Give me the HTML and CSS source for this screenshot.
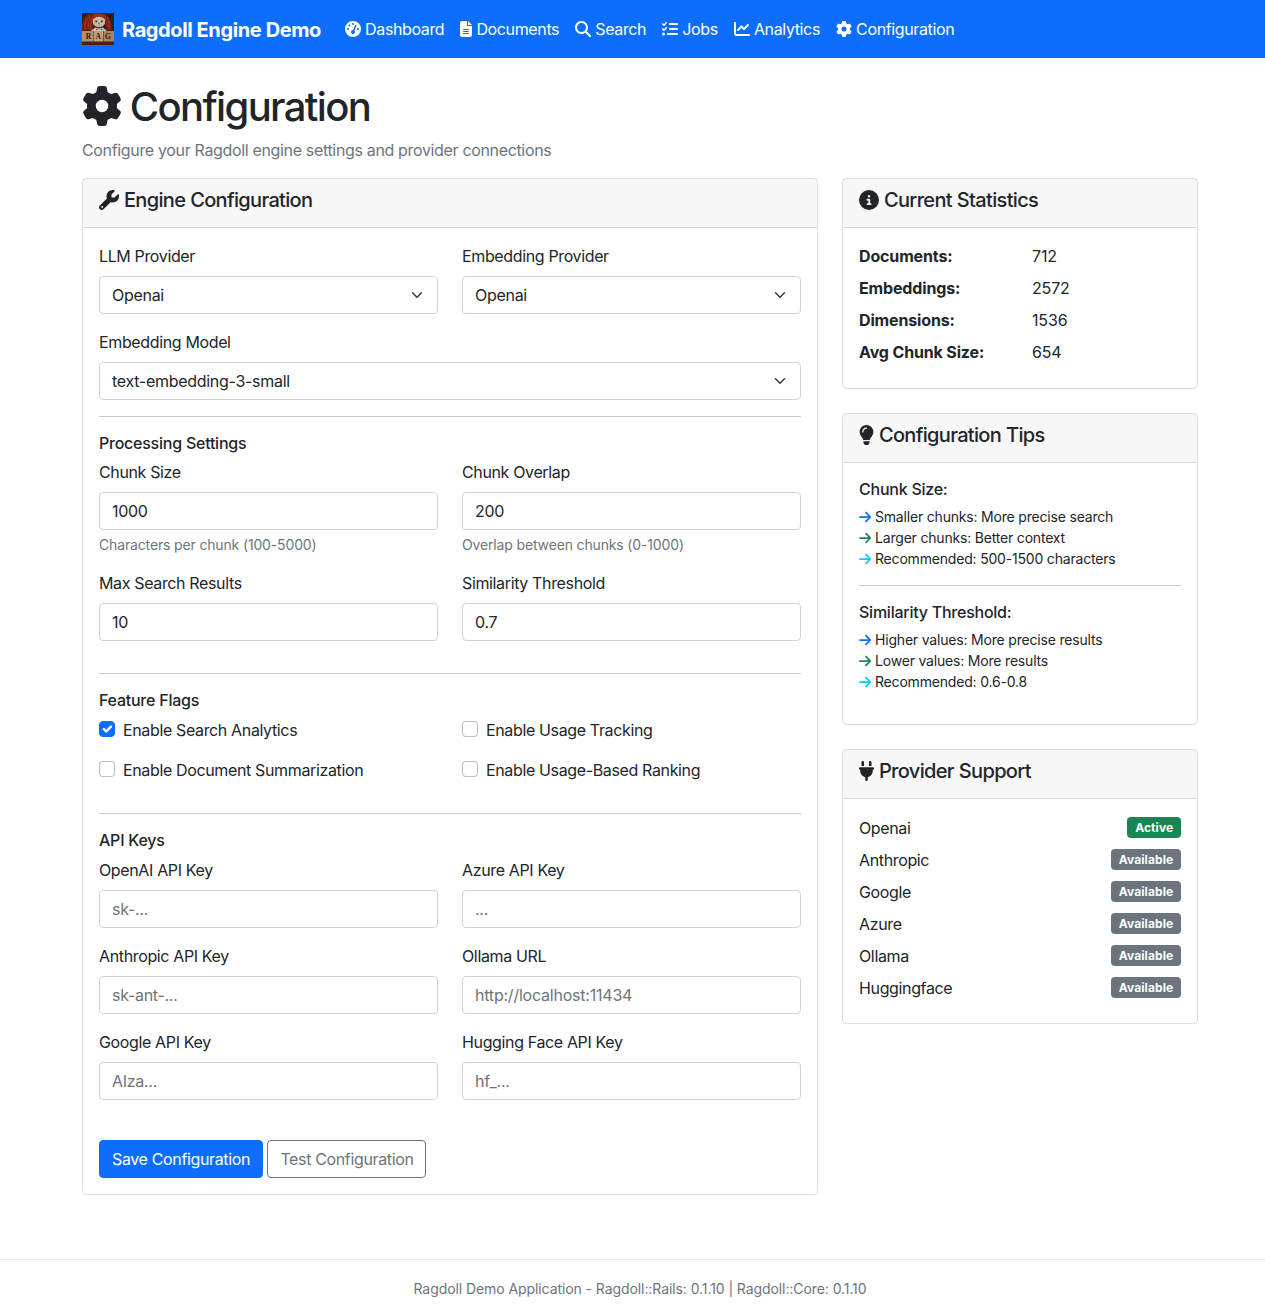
FILE: index.html
```html
<!DOCTYPE html>
<html lang="en">
<head>
<meta charset="utf-8">
<title>Ragdoll Engine Demo</title>
<link rel="stylesheet" href="styles.css">
</head>
<body>
<svg class="sprite" aria-hidden="true">
  <symbol id="gear" viewBox="0 0 512 512"><path d="M495.9 166.6c3.2 8.700 .5 18.400-6.400 24.600l-43.300 39.400c1.100 8.300 1.700 16.800 1.700 25.400s-.6 17.100-1.700 25.400l43.300 39.400c6.900 6.200 9.600 15.900 6.400 24.600c-4.400 11.900-9.700 23.300-15.800 34.300l-4.700 8.100c-6.600 11-14 21.400-22.100 31.200c-5.900 7.200-15.700 9.600-24.500 6.800l-55.700-17.700c-13.400 10.300-28.200 18.900-44 25.400l-12.500 57.100c-2 9.100-9 16.300-18.200 17.800c-13.800 2.300-28 3.500-42.500 3.500s-28.700-1.200-42.500-3.500c-9.200-1.500-16.200-8.700-18.200-17.800l-12.500-57.100c-15.800-6.500-30.600-15.100-44-25.400L83.100 425.900c-8.800 2.800-18.600 .3-24.500-6.800c-8.100-9.800-15.500-20.200-22.100-31.200l-4.700-8.100c-6.100-11-11.400-22.400-15.800-34.300c-3.200-8.700-.5-18.400 6.400-24.600l43.300-39.400C64.600 273.100 64 264.600 64 256s.6-17.100 1.700-25.400L22.400 191.200c-6.900-6.200-9.600-15.900-6.400-24.600c4.400-11.900 9.700-23.300 15.800-34.300l4.700-8.100c6.600-11 14-21.400 22.100-31.200c5.900-7.200 15.700-9.600 24.500-6.800l55.700 17.700c13.400-10.300 28.200-18.900 44-25.400l12.500-57.100c2-9.100 9-16.300 18.200-17.800C227.300 1.200 241.500 0 256 0s28.700 1.200 42.500 3.500c9.200 1.500 16.200 8.700 18.200 17.800l12.500 57.100c15.800 6.500 30.600 15.100 44 25.400l55.700-17.700c8.800-2.800 18.600-.3 24.500 6.800c8.100 9.800 15.500 20.200 22.100 31.200l4.700 8.100c6.100 11 11.400 22.400 15.800 34.300zM256 336a80 80 0 1 0 0-160 80 80 0 1 0 0 160z"/></symbol>
  <symbol id="wrench" viewBox="0 0 512 512"><path d="M352 320c88.400 0 160-71.600 160-160c0-15.300-2.200-30.100-6.200-44.200c-3.100-10.800-16.400-13.200-24.300-5.300l-76.800 76.800c-3 3-7.100 4.700-11.300 4.700L336 192c-8.800 0-16-7.200-16-16l0-57.400c0-4.200 1.700-8.300 4.700-11.300l76.800-76.800c7.900-7.900 5.400-21.200-5.300-24.300C382.100 2.200 367.300 0 352 0C263.600 0 192 71.600 192 160c0 19.100 3.400 37.500 9.500 54.500L19.900 396.100C7.200 408.800 0 426.100 0 444.100C0 481.600 30.400 512 67.900 512c18 0 35.300-7.200 48-19.900L297.500 310.500c17 6.200 35.400 9.500 54.500 9.500zM80 408a24 24 0 1 1 0 48 24 24 0 1 1 0-48z"/></symbol>
  <symbol id="info" viewBox="0 0 512 512"><path d="M256 512A256 256 0 1 0 256 0a256 256 0 1 0 0 512zM216 336l24 0 0-64-24 0c-13.300 0-24-10.700-24-24s10.700-24 24-24l48 0c13.300 0 24 10.700 24 24l0 88 8 0c13.300 0 24 10.700 24 24s-10.700 24-24 24l-80 0c-13.300 0-24-10.700-24-24s10.700-24 24-24zm40-208a32 32 0 1 1 0 64 32 32 0 1 1 0-64z"/></symbol>
  <symbol id="bulb" viewBox="0 0 384 512"><path d="M272 384c9.600-31.900 29.500-59.100 49.200-86.200c5.200-7.100 10.400-14.200 15.400-21.400c19.800-28.500 31.400-63 31.400-100.300C368 78.800 289.200 0 192 0S16 78.800 16 176c0 37.300 11.600 71.900 31.400 100.300c5 7.200 10.200 14.300 15.400 21.400c19.800 27.100 39.700 54.400 49.200 86.200l160 0zM192 512c44.200 0 80-35.800 80-80l0-16-160 0 0 16c0 44.200 35.800 80 80 80zM112 176c0 8.800-7.200 16-16 16s-16-7.200-16-16c0-61.900 50.100-112 112-112c8.800 0 16 7.200 16 16s-7.200 16-16 16c-44.200 0-80 35.800-80 80z"/></symbol>
  <symbol id="plug" viewBox="0 0 384 512"><path d="M96 0C78.300 0 64 14.300 64 32l0 96 64 0 0-96c0-17.700-14.300-32-32-32zM288 0c-17.700 0-32 14.300-32 32l0 96 64 0 0-96c0-17.700-14.300-32-32-32zM32 160c-17.700 0-32 14.300-32 32s14.300 32 32 32l0 32c0 77.400 55 142 128 156.800l0 67.200c0 17.700 14.300 32 32 32s32-14.300 32-32l0-67.200C297 398 352 333.400 352 256l0-32c17.700 0 32-14.300 32-32s-14.300-32-32-32L32 160z"/></symbol>
  <symbol id="search" viewBox="0 0 512 512"><path d="M416 208c0 45.900-14.900 88.300-40 122.700L502.600 457.400c12.500 12.500 12.500 32.800 0 45.300s-32.800 12.500-45.300 0L330.700 376c-34.400 25.200-76.800 40-122.700 40C93.100 416 0 322.900 0 208S93.100 0 208 0S416 93.100 416 208zM208 352a144 144 0 1 0 0-288 144 144 0 1 0 0 288z"/></symbol>
  <symbol id="file" viewBox="0 0 384 512"><path d="M64 0C28.700 0 0 28.700 0 64L0 448c0 35.300 28.700 64 64 64l256 0c35.300 0 64-28.700 64-64l0-288-128 0c-17.700 0-32-14.300-32-32L224 0 64 0zM256 0l0 128 128 0L256 0zM112 256l160 0c8.800 0 16 7.200 16 16s-7.200 16-16 16l-160 0c-8.800 0-16-7.200-16-16s7.200-16 16-16zm0 64l160 0c8.800 0 16 7.200 16 16s-7.200 16-16 16l-160 0c-8.800 0-16-7.200-16-16s7.200-16 16-16zm0 64l160 0c8.800 0 16 7.200 16 16s-7.200 16-16 16l-160 0c-8.800 0-16-7.200-16-16s7.200-16 16-16z"/></symbol>
  <symbol id="chart" viewBox="0 0 512 512"><path d="M64 64c0-17.700-14.300-32-32-32S0 46.300 0 64L0 400c0 44.200 35.800 80 80 80l400 0c17.700 0 32-14.300 32-32s-14.300-32-32-32L80 416c-8.800 0-16-7.200-16-16L64 64zm406.600 86.600c12.500-12.500 12.500-32.800 0-45.300s-32.800-12.500-45.300 0L320 210.700l-57.400-57.400c-12.500-12.500-32.800-12.500-45.300 0l-112 112c-12.500 12.500-12.500 32.800 0 45.300s32.800 12.500 45.300 0L240 221.300l57.400 57.400c12.500 12.500 32.800 12.500 45.300 0l128-128z"/></symbol>
  <symbol id="tasks" viewBox="0 0 512 512"><path d="M152.100 38.200c9.900 8.900 10.700 24 1.800 33.900l-72 80c-4.400 4.900-10.600 7.800-17.200 7.900s-12.900-2.400-17.600-7L7 113C-2.300 103.600-2.300 88.400 7 79s24.600-9.400 33.900 0l22.100 22.100 55.100-61.200c8.900-9.900 24-10.700 33.900-1.800zm0 160c9.900 8.900 10.700 24 1.800 33.900l-72 80c-4.400 4.900-10.600 7.800-17.200 7.900s-12.900-2.400-17.600-7L7 273c-9.400-9.400-9.400-24.600 0-33.900s24.600-9.400 33.900 0l22.100 22.100 55.100-61.200c8.900-9.900 24-10.700 33.900-1.800zM224 96c0-17.700 14.300-32 32-32l224 0c17.700 0 32 14.300 32 32s-14.300 32-32 32l-224 0c-17.700 0-32-14.300-32-32zm0 160c0-17.700 14.300-32 32-32l224 0c17.700 0 32 14.300 32 32s-14.300 32-32 32l-224 0c-17.700 0-32-14.300-32-32zM160 416c0-17.700 14.300-32 32-32l288 0c17.700 0 32 14.300 32 32s-14.300 32-32 32l-288 0c-17.700 0-32-14.300-32-32zM48 368a48 48 0 1 1 0 96 48 48 0 1 1 0-96z"/></symbol>
  <symbol id="gauge" viewBox="0 0 512 512"><path d="M0 256a256 256 0 1 1 512 0A256 256 0 1 1 0 256zM288 96a32 32 0 1 0 -64 0 32 32 0 1 0 64 0zM256 416c35.300 0 64-28.700 64-64c0-17.400-6.900-33.100-18.100-44.600L366 161.700c5.300-12.100-.2-26.300-12.300-31.600s-26.300 .2-31.600 12.300L257.900 288c-.6 0-1.300 0-1.900 0c-35.300 0-64 28.700-64 64s28.700 64 64 64zM176 144a32 32 0 1 0 -64 0 32 32 0 1 0 64 0zM96 288a32 32 0 1 0 0-64 32 32 0 1 0 0 64zm352-32a32 32 0 1 0 -64 0 32 32 0 1 0 64 0z"/></symbol>
  <symbol id="arrow" viewBox="0 0 448 512"><path d="M438.600 278.600c12.500-12.500 12.500-32.800 0-45.300l-160-160c-12.500-12.500-32.800-12.500-45.300 0s-12.500 32.800 0 45.300L338.800 224 32 224c-17.700 0-32 14.300-32 32s14.300 32 32 32l306.700 0L233.400 393.400c-12.500 12.500-12.500 32.800 0 45.300s32.800 12.500 45.300 0l160-160z"/></symbol>
  <symbol id="chevron" viewBox="0 0 16 16"><path d="M2 5l6 6 6-6" fill="none" stroke="#343a40" stroke-width="2" stroke-linecap="round" stroke-linejoin="round"/></symbol>
</svg>

<nav class="navbar">
  <div class="container navbar-inner">
    <a class="brand">
      <svg class="logo" viewBox="0 0 32 32">
        <rect width="32" height="32" fill="#2a1f1c"/>
        <path d="M0 18Q-1 7 5 2Q10-1 17 0Q26 0 28 7Q31 12 29 18L24 17L23 6L12 5L11 17Z" fill="#7c2014"/>
        <path d="M3 16Q2 8 8 3M6 16Q5 9 10 4M9 17Q7 11 11 6M25 4Q28 9 27 16M12 2Q17 0 23 3" fill="none" stroke="#b03c26" stroke-width=".9"/>
        <path d="M11 6Q17 1 23 6Q24 11 21 13Q17 15.500 13 13Q10 11 11 6Z" fill="#cdb7a2"/>
        <path d="M10 7Q14 3 17 3.500Q21 3 24 7L23 1.500L12 1Z" fill="#94301e"/>
        <circle cx="14.200" cy="8.300" r="1.100" fill="#2a3a38"/><circle cx="19.800" cy="8.300" r="1.100" fill="#2a3a38"/>
        <circle cx="17" cy="10.300" r=".8" fill="#c6281f"/><path d="M15.800 12.300h2.400" stroke="#a0604e" stroke-width=".6"/>
        <path d="M9 18l4-3.500 4 1 4-1 4 3.500z" fill="#c9bfba"/><path d="M14 16.500h1.500M19 16.500h1.500" stroke="#6d3b35"/>
        <rect y="28" width="32" height="4" fill="#4b2115"/>
        <rect y="18" width="11" height="10.500" fill="#b78d69"/><rect x="11.500" y="18" width="9.500" height="10.500" fill="#c39b77"/><rect x="21.500" y="18" width="10.500" height="10.500" fill="#ae835f"/>
        <text class="logo-letter" x="6.500" y="25.800">R</text><text class="logo-letter" x="16.300" y="25.800">A</text><text class="logo-letter" x="26" y="25.800">G</text>
      </svg>
      <span class="brand-name">Ragdoll Engine Demo</span>
    </a>
    <a class="nav-link"><svg class="icon"><use href="#gauge"/></svg> Dashboard</a>
    <a class="nav-link"><svg class="icon narrow"><use href="#file"/></svg> Documents</a>
    <a class="nav-link"><svg class="icon"><use href="#search"/></svg> Search</a>
    <a class="nav-link"><svg class="icon"><use href="#tasks"/></svg> Jobs</a>
    <a class="nav-link"><svg class="icon"><use href="#chart"/></svg> Analytics</a>
    <a class="nav-link"><svg class="icon"><use href="#gear"/></svg> Configuration</a>
  </div>
</nav>

<main class="container main">
  <h1 class="page-title"><svg class="icon"><use href="#gear"/></svg> Configuration</h1>
  <p class="lead">Configure your Ragdoll engine settings and provider connections</p>

  <div class="columns">
    <section class="card">
      <header class="card-header"><h5 class="card-title"><svg class="icon"><use href="#wrench"/></svg> Engine Configuration</h5></header>
      <form class="card-body">
        <div class="grid">
          <div class="field"><label class="label">LLM Provider</label><div class="control select">Openai<svg class="chevron"><use href="#chevron"/></svg></div></div>
          <div class="field"><label class="label">Embedding Provider</label><div class="control select">Openai<svg class="chevron"><use href="#chevron"/></svg></div></div>
        </div>
        <div class="field model"><label class="label">Embedding Model</label><div class="control select">text-embedding-3-small<svg class="chevron"><use href="#chevron"/></svg></div></div>
        <hr class="rule">
        <h6 class="subhead">Processing Settings</h6>
        <div class="grid spaced">
          <div class="field"><label class="label">Chunk Size</label><input class="control" value="1000"><div class="hint">Characters per chunk (100-5000)</div></div>
          <div class="field"><label class="label">Chunk Overlap</label><input class="control" value="200"><div class="hint">Overlap between chunks (0-1000)</div></div>
          <div class="field"><label class="label">Max Search Results</label><input class="control" value="10"></div>
          <div class="field"><label class="label">Similarity Threshold</label><input class="control" value="0.7"></div>
        </div>
        <hr class="rule">
        <h6 class="subhead">Feature Flags</h6>
        <div class="grid spaced">
          <label class="check"><input class="checkbox" type="checkbox" checked><svg class="tick" viewBox="0 0 20 20"><path d="M6 10l3 3 6-6"/></svg>Enable Search Analytics</label>
          <label class="check"><input class="checkbox" type="checkbox">Enable Usage Tracking</label>
          <label class="check"><input class="checkbox" type="checkbox">Enable Document Summarization</label>
          <label class="check"><input class="checkbox" type="checkbox">Enable Usage-Based Ranking</label>
        </div>
        <hr class="rule">
        <h6 class="subhead">API Keys</h6>
        <div class="grid spaced">
          <div class="field"><label class="label">OpenAI API Key</label><input class="control" placeholder="sk-..."></div>
          <div class="field"><label class="label">Azure API Key</label><input class="control" placeholder="..."></div>
          <div class="field"><label class="label">Anthropic API Key</label><input class="control" placeholder="sk-ant-..."></div>
          <div class="field"><label class="label">Ollama URL</label><input class="control url" placeholder="http://localhost:11434"></div>
          <div class="field"><label class="label">Google API Key</label><input class="control" placeholder="AIza..."></div>
          <div class="field"><label class="label">Hugging Face API Key</label><input class="control" placeholder="hf_..."></div>
        </div>
        <div class="actions">
          <button type="button" class="btn btn-primary">Save Configuration</button>
          <button type="button" class="btn btn-outline">Test Configuration</button>
        </div>
      </form>
    </section>

    <aside class="side">
      <section class="card">
        <header class="card-header"><h5 class="card-title"><svg class="icon"><use href="#info"/></svg> Current Statistics</h5></header>
        <dl class="card-body stats">
          <dt>Documents:</dt><dd>712</dd>
          <dt>Embeddings:</dt><dd>2572</dd>
          <dt>Dimensions:</dt><dd>1536</dd>
          <dt>Avg Chunk Size:</dt><dd>654</dd>
        </dl>
      </section>

      <section class="card">
        <header class="card-header"><h5 class="card-title"><svg class="icon narrow"><use href="#bulb"/></svg> Configuration Tips</h5></header>
        <div class="card-body">
          <h6 class="subhead">Chunk Size:</h6>
          <ul class="tips">
            <li><svg class="icon arrow blue"><use href="#arrow"/></svg> Smaller chunks: More precise search</li>
            <li><svg class="icon arrow green"><use href="#arrow"/></svg> Larger chunks: Better context</li>
            <li><svg class="icon arrow cyan"><use href="#arrow"/></svg> Recommended: 500-1500 characters</li>
          </ul>
          <hr class="rule">
          <h6 class="subhead">Similarity Threshold:</h6>
          <ul class="tips">
            <li><svg class="icon arrow blue"><use href="#arrow"/></svg> Higher values: More precise results</li>
            <li><svg class="icon arrow green"><use href="#arrow"/></svg> Lower values: More results</li>
            <li><svg class="icon arrow cyan"><use href="#arrow"/></svg> Recommended: 0.6-0.8</li>
          </ul>
        </div>
      </section>

      <section class="card">
        <header class="card-header"><h5 class="card-title"><svg class="icon narrow"><use href="#plug"/></svg> Provider Support</h5></header>
        <div class="card-body">
          <div class="provider">Openai<span class="badge active">Active</span></div>
          <div class="provider">Anthropic<span class="badge">Available</span></div>
          <div class="provider">Google<span class="badge">Available</span></div>
          <div class="provider">Azure<span class="badge">Available</span></div>
          <div class="provider">Ollama<span class="badge">Available</span></div>
          <div class="provider">Huggingface<span class="badge">Available</span></div>
        </div>
      </section>
    </aside>
  </div>
</main>

<footer class="footer">
  <p class="container footer-text">Ragdoll Demo Application - Ragdoll::Rails: 0.1.10 | Ragdoll::Core: 0.1.10</p>
</footer>
</body>
</html>
```
FILE: styles.css
```css
*, *::before, *::after { box-sizing: border-box; }

body {
  margin: 0;
  background: #fff;
  color: #212529;
  font: 400 16px/1.5 Inter, "Liberation Sans", sans-serif;
  letter-spacing: -0.36px;
}

h1, h5, h6, p, ul, dl, dd { margin: 0; padding: 0; }

.sprite { display: none; }

.container { width: 1140px; margin-left: 70px; padding: 0 12px; }

.icon {
  display: inline-block;
  width: 1em;
  height: 1em;
  vertical-align: -0.125em;
  fill: currentColor;
}
.icon.narrow { width: 0.75em; }
.icon.arrow { width: 0.875em; }

/* Navigation */
.navbar { height: 58px; background: #0d6efd; color: #fff; }
.navbar-inner { display: flex; align-items: center; height: 58px; }
.brand { display: flex; align-items: center; gap: 8px; margin-right: 16px; }
.brand-name { padding-top: 1px; font-size: 20px; font-weight: 700; line-height: 30px; white-space: nowrap; letter-spacing: -0.39px; }
.logo { display: block; width: 32px; height: 32px; }
.logo-letter { font: 700 7.5px "Liberation Serif", serif; text-anchor: middle; letter-spacing: 0; fill: #2b1a14; }
.nav-link { padding: 8px; white-space: nowrap; letter-spacing: -0.37px; }

/* Page heading */
.main { padding-top: 24px; }
.page-title { margin-bottom: 6px; font-size: 40px; font-weight: 500; line-height: 50px; letter-spacing: -1.65px; word-spacing: -1.2px; }
.lead { margin-bottom: 16px; color: #6c757d; letter-spacing: -0.34px; }

.columns { display: grid; grid-template-columns: 736px 356px; gap: 24px; align-items: start; }
.side { display: flex; flex-direction: column; gap: 24px; }

/* Cards */
.card { border: 1px solid rgba(0, 0, 0, 0.125); border-radius: 4px; }
.card-header { padding: 8px 16px; background: rgba(0, 0, 0, 0.03); border-bottom: 1px solid rgba(0, 0, 0, 0.125); }
.card-title { margin-bottom: 6px; font-size: 20px; font-weight: 500; line-height: 26px; letter-spacing: -0.67px; word-spacing: 0.3px; }
.card-body { padding: 16px; }

/* Form */
.grid { display: grid; grid-template-columns: 1fr 1fr; gap: 16px 24px; }
.grid.spaced { margin-bottom: 32px; }
.model { margin-top: 16px; }
.label { display: block; margin-bottom: 8px; }
.control {
  display: block;
  width: 100%;
  height: 38px;
  padding: 6px 12px;
  border: 1px solid #ced4da;
  border-radius: 4px;
  background: #fff;
  color: #212529;
  font: inherit;
  letter-spacing: -0.29px;
}
.control::placeholder { color: #6c757d; opacity: 1; }
.control.url { letter-spacing: -0.22px; }
.select { display: flex; align-items: center; justify-content: space-between; }
.chevron { width: 16px; height: 12px; }
.hint { margin-top: 4px; color: #6c757d; font-size: 14px; line-height: 21px; letter-spacing: -0.15px; }
.rule { height: 1px; margin: 16px 0; border: 0; background: #c8c9ca; }
.subhead { margin-bottom: 6px; font-size: 16px; font-weight: 500; line-height: 21.2px; letter-spacing: -0.24px; }

.check { display: flex; position: relative; gap: 8px; height: 24px; line-height: 26px; }
.checkbox {
  appearance: none;
  width: 16px;
  height: 16px;
  margin: 4px 0 0;
  border: 1px solid rgba(0, 0, 0, 0.25);
  border-radius: 4px;
  background: #fff;
}
.checkbox:checked { border-color: #0d6efd; background: #0d6efd; }
.tick {
  position: absolute;
  top: 4px;
  left: 0;
  width: 16px;
  height: 16px;
  fill: none;
  stroke: #fff;
  stroke-width: 3;
  stroke-linecap: round;
  stroke-linejoin: round;
}

.actions { display: flex; gap: 4.4px; margin-top: 40px; }
.btn { height: 38px; padding: 6px 12px; border: 1px solid; border-radius: 4px; font: inherit; letter-spacing: -0.36px; white-space: nowrap; }
.btn-primary { border-color: #0d6efd; background: #0d6efd; color: #fff; }
.btn-outline { border-color: #6c757d; background: #fff; color: #6c757d; }

/* Sidebar */
.stats { display: grid; grid-template-columns: 173px 1fr; row-gap: 8px; padding-bottom: 24px; }
.stats dt { font-weight: 700; letter-spacing: -0.15px; }
.stats dd { letter-spacing: -0.15px; }
.tips { list-style: none; margin-bottom: 16px; font-size: 14px; line-height: 21px; letter-spacing: -0.19px; }
.blue { color: #0d6efd; }
.green { color: #198754; }
.cyan { color: #0dcaf0; }
.provider { display: flex; align-items: center; justify-content: space-between; padding-top: 0.6px; margin-bottom: 7.4px; }
.badge {
  margin-top: -1px;
  padding: 4.7px 7.8px 3.7px;
  border-radius: 4px;
  background: #6c757d;
  color: #fff;
  font-size: 12px;
  font-weight: 700;
  line-height: 12px;
  letter-spacing: 0.08px;
}
.badge.active { background: #198754; }

/* Footer */
.footer { margin-top: 64px; padding: 18px 0 16px; border-top: 1px solid #e6e7e8; }
.footer-text { color: #6c757d; font-size: 14px; line-height: 21px; text-align: center; letter-spacing: -0.08px; }
```
